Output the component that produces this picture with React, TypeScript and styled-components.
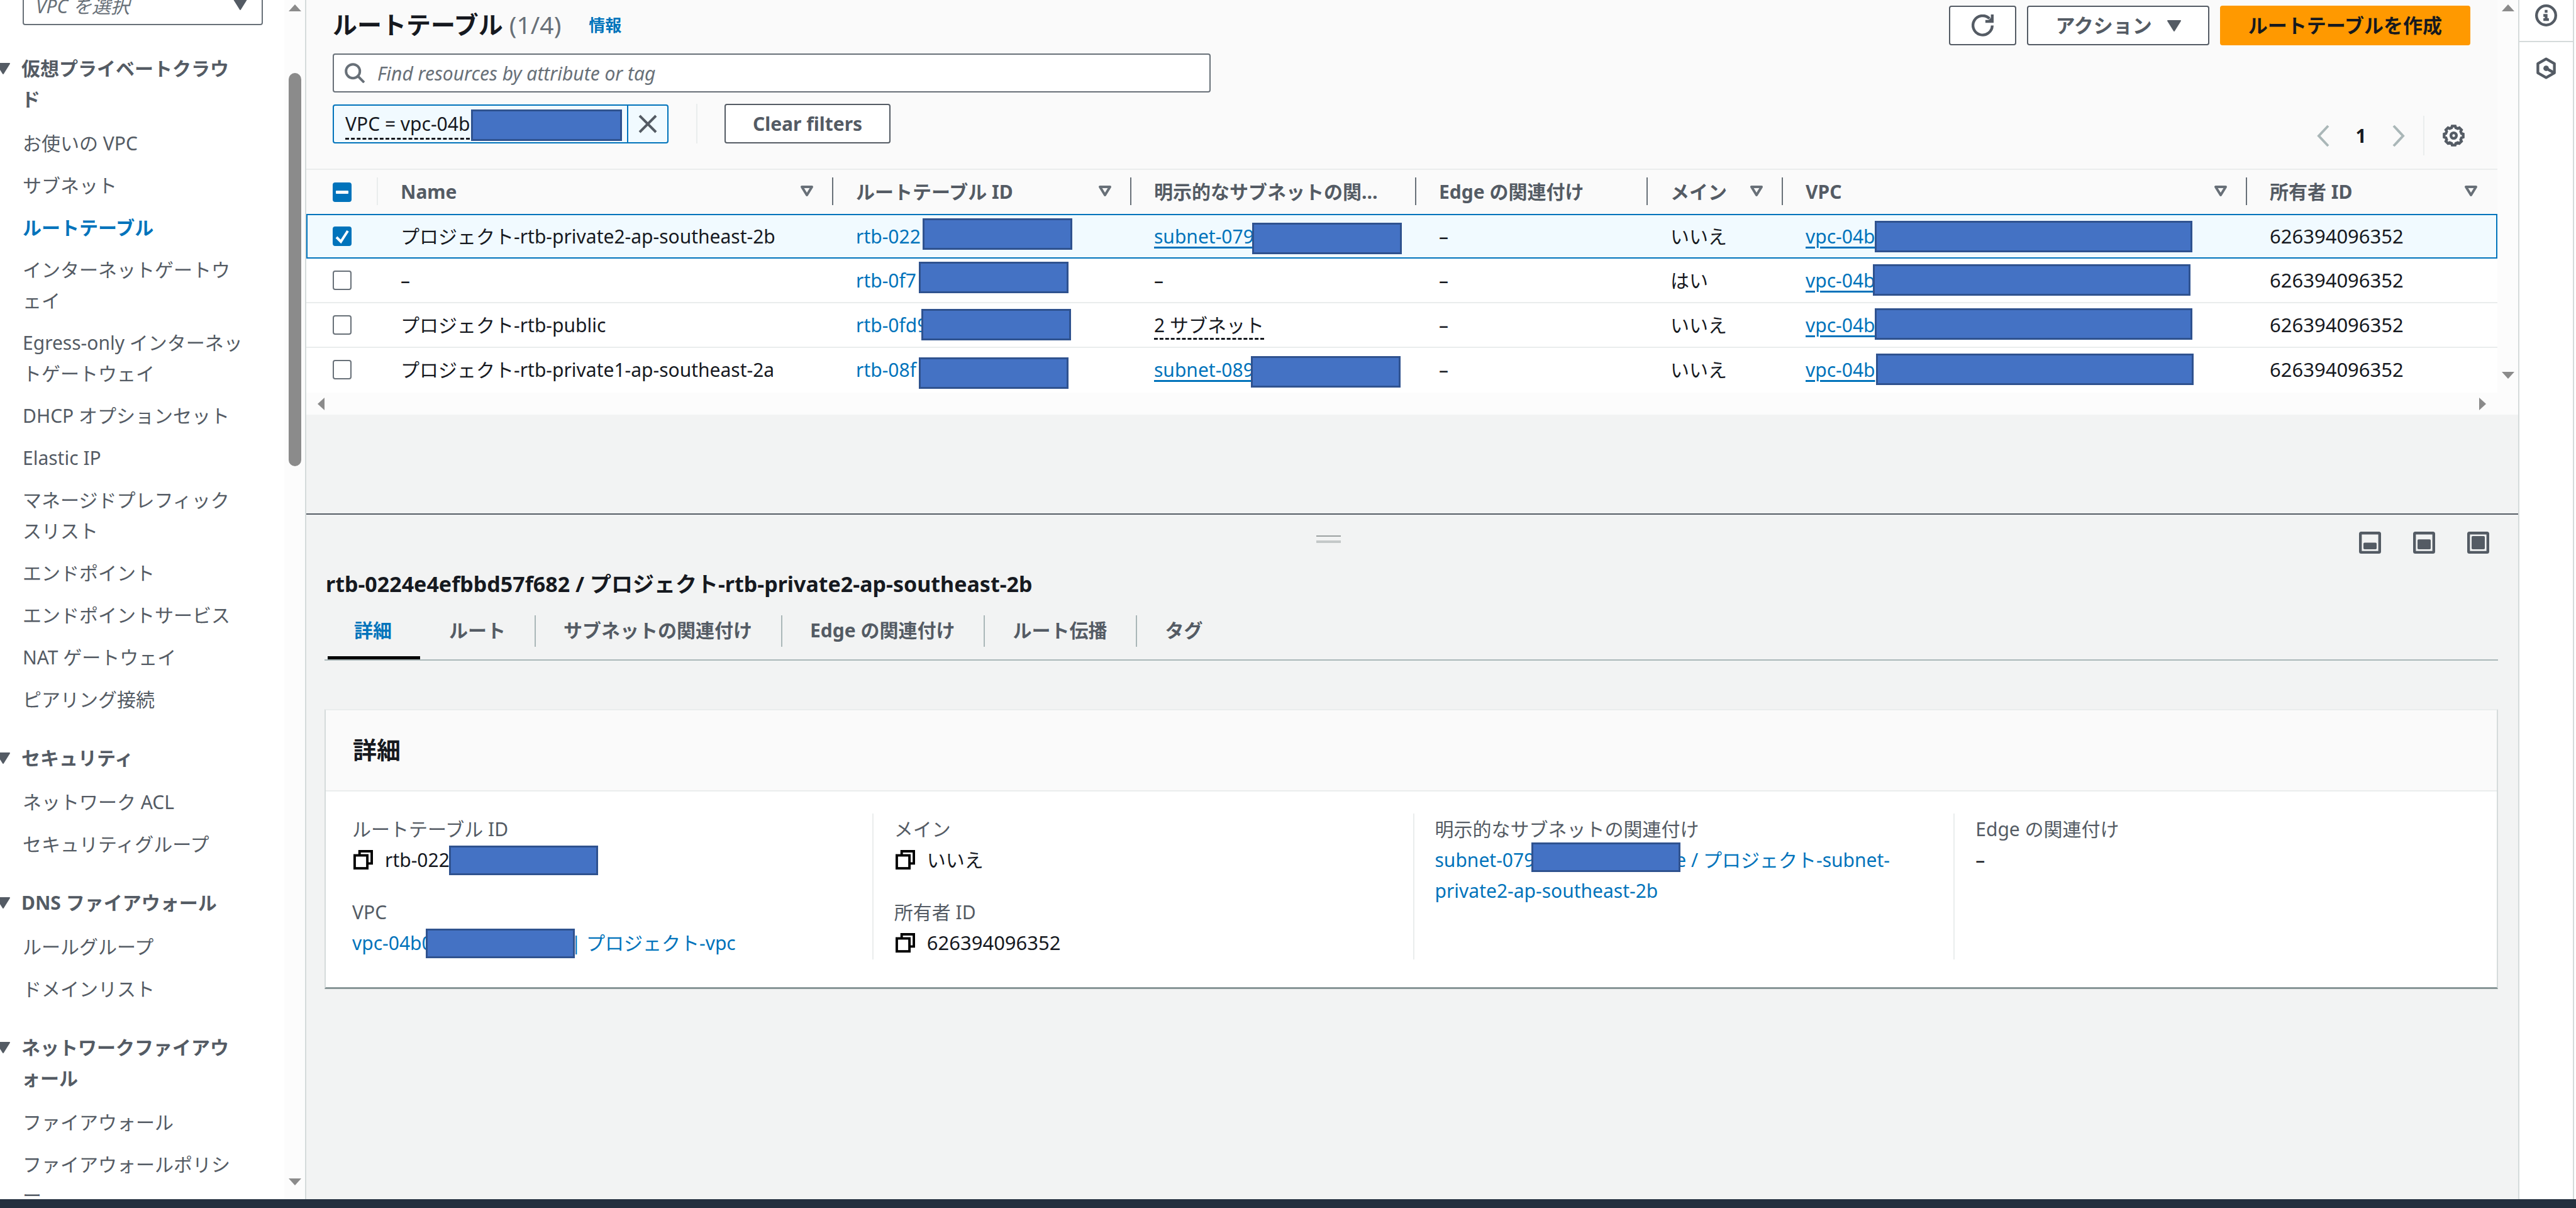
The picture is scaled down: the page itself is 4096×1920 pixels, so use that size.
import React from "react";
import styled, { createGlobalStyle, css } from "styled-components";

const c = {
  blue: "#0073bb",
  text: "#16191f",
  gray: "#545b64",
  mid: "#687078",
  line: "#eaeded",
  rule: "#d5dbdb",
  soft: "#aab7b8",
  pale: "#fafafa",
  page: "#f2f3f3",
  arrow: "#8b8b8b",
};

const Global = createGlobalStyle`
  * { box-sizing: border-box; }
  html { font-size: 30px; }
  body {
    margin: 0;
    color: ${c.text};
    background: #fff;
    font-family: "Noto Sans", "Noto Sans CJK JP", sans-serif;
    font-size: 30px;
    line-height: 49px;
    overflow: hidden;
  }
  button, input, select { font: inherit; color: inherit; }
  a { color: ${c.blue}; text-decoration: none; }
  h1, h2, h3, ul, dl, dd, p { margin: 0; padding: 0; }
`;

/* ---------- shell ---------- */
const Shell = styled.div`
  display: flex;
  flex-direction: column;
  height: 100vh;
`;
const Workspace = styled.div`
  flex: 1;
  min-height: 0;
  display: grid;
  grid-template-columns: 487px minmax(0, 1fr) 92px;
`;
const Footer = styled.footer`
  height: 14px;
  background: #232f3e;
`;

/* ---------- scrollbars ---------- */
const VTrack = styled.div`
  width: 33px;
  flex: none;
  display: flex;
  flex-direction: column;
  align-items: center;
  padding: 7px 0 22px;
  background: #fcfcfc;
`;
const HTrack = styled.div`
  height: 35px;
  display: flex;
  align-items: center;
  justify-content: space-between;
  padding: 0 51px 0 18px;
  background: #fcfcfc;
`;
const Thumb = styled.div`
  width: 20px;
  height: 625px;
  margin-top: 98px;
  border-radius: 10px;
  background: ${c.arrow};
`;
const Push = styled.div`
  flex: 1;
`;
const Tri = ({ dir }: { dir: "up" | "down" | "left" | "right" }) => {
  const vertical = dir === "up" || dir === "down";
  const pts = {
    up: "10,0 20,11 0,11",
    down: "0,0 20,0 10,11",
    left: "11,0 11,20 0,10",
    right: "0,0 11,10 0,20",
  }[dir];
  return (
    <svg width={vertical ? 20 : 11} height={vertical ? 11 : 20} aria-hidden="true">
      <polygon points={pts} fill={c.arrow} />
    </svg>
  );
};

/* ---------- icons ---------- */
const Icon = ({ size = 35, children, color = c.gray }: { size?: number; color?: string; children: React.ReactNode }) => (
  <svg width={size} height={size} viewBox="0 0 16 16" fill="none" stroke={color} strokeWidth={2} aria-hidden="true">
    {children}
  </svg>
);
const Caret = () => (
  <svg width={22} height={18} viewBox="0 0 22 18" aria-hidden="true">
    <polygon points="1,1 21,1 11,17" fill={c.gray} stroke={c.gray} strokeWidth={2} strokeLinejoin="round" />
  </svg>
);
const SortCaret = () => (
  <svg width={22} height={18} viewBox="0 0 22 18" aria-hidden="true">
    <polygon points="3,2 19,2 11,15" fill="none" stroke={c.mid} strokeWidth={4} strokeLinejoin="round" />
  </svg>
);
const RefreshIcon = () => (
  <Icon>
    <path d="M15 8a7 7 0 1 1-2-5" />
    <path d="M14 0h2v6h-6V4h2.4L14 2.4z" fill={c.gray} stroke="none" />
  </Icon>
);
const SearchIcon = () => (
  <Icon size={32} color={c.mid}>
    <circle cx="6.6" cy="6.6" r="5.5" />
    <path d="M10.5 10.5l5 5" />
  </Icon>
);
const gearPoints = Array.from({ length: 8 }, (_, k) =>
  [
    [-15, 5.9],
    [-9, 7],
    [9, 7],
    [15, 5.9],
  ].map(([d, r]) => {
    const a = ((k * 45 + d) * Math.PI) / 180;
    return `${(8 + r * Math.sin(a)).toFixed(2)},${(8 - r * Math.cos(a)).toFixed(2)}`;
  })
)
  .flat()
  .join(" ");
const GearIcon = () => (
  <Icon>
    <polygon points={gearPoints} />
    <circle cx="8" cy="8" r="2" />
  </Icon>
);
const InfoIcon = () => (
  <Icon>
    <circle cx="8" cy="8" r="7" />
    <path d="M7 4h2v2H7zM6 7h3v3h1v2H6v-2h1V9H6z" fill={c.gray} stroke="none" />
  </Icon>
);
const HexIcon = () => (
  <Icon>
    <path d="M8 1.2l6 3.4v6.8l-6 3.4-6-3.4V4.6z" strokeLinejoin="round" />
    <circle cx="8" cy="8" r="2" fill={c.gray} stroke="none" />
    <path d="M8 8l5.6 3.2" />
  </Icon>
);
const CopyIcon = () => (
  <Icon size={31} color="#000">
    <rect x="1" y="4.4" width="10.4" height="10.6" />
    <path d="M5 4V1h10v10h-3.5" />
  </Icon>
);
const PanelIcon = ({ top }: { top: number }) => (
  <Icon>
    <rect x="1" y="1" width="14" height="14" rx="0.6" />
    <rect x="3.2" y={top} width="9.6" height={12.8 - top} rx="0.8" fill={c.gray} stroke="none" />
  </Icon>
);

/* ---------- navigation ---------- */
const Sidebar = styled.aside`
  display: flex;
  min-height: 0;
  overflow: hidden;
  border-right: 2px solid ${c.rule};
`;
const NavScroll = styled.nav`
  flex: 1;
  min-width: 0;
  padding: 0 34px 0 36px;
  margin-top: -22px;
  line-break: loose;
  color: ${c.gray};
`;
const SelectBox = styled.div`
  position: relative;
  svg {
    position: absolute;
    right: 25px;
    top: 20px;
    pointer-events: none;
  }
`;
const Select = styled.select`
  appearance: none;
  width: 100%;
  height: 62px;
  padding: 0 60px 0 19px;
  border: 2px solid ${c.mid};
  border-radius: 4px;
  background: #fff;
  font-style: italic;
  color: ${c.mid};
`;
const Group = styled.section`
  margin-top: 44px;
  width: 355px;
`;
const GroupTitle = styled.h3`
  display: flex;
  gap: 18px;
  margin: 0 0 21px -42px;
  font-size: 30px;
  font-weight: 700;
  svg {
    flex: none;
    margin-top: 16px;
  }
`;
const NavList = styled.ul`
  display: flex;
  flex-direction: column;
  gap: 18px;
  list-style: none;
`;
const NavLink = styled.a<{ $active?: boolean }>`
  display: block;
  color: ${(p) => (p.$active ? c.blue : c.gray)};
  font-weight: ${(p) => (p.$active ? 700 : 400)};
`;

/* ---------- main ---------- */
const Main = styled.main`
  display: grid;
  grid-template-rows: 816px minmax(0, 1fr);
  min-width: 0;
  background: ${c.page};
`;
const TableArea = styled.div`
  min-width: 0;
`;
const TableFrame = styled.div`
  display: flex;
`;
const TableMain = styled.div`
  flex: 1;
  min-width: 0;
  background: ${c.pale};
`;
const Header = styled.header`
  padding: 9px 43px 21px 42px;
  border-bottom: 2px solid ${c.line};
`;
const Row = styled.div`
  display: flex;
  align-items: center;
`;
const Title = styled.h1`
  padding-bottom: 4px;
  font-size: 39px;
  font-weight: 700;
  margin-right: 44px;
  span {
    font-weight: 400;
    color: ${c.mid};
  }
`;
const InfoLink = styled.a`
  font-size: 26px;
  font-weight: 700;
`;
const Actions = styled.div`
  display: flex;
  gap: 17px;
  margin-left: auto;
  font-size: 31px;
`;
const Button = styled.button<{ $primary?: boolean; $icon?: boolean }>`
  display: flex;
  align-items: center;
  justify-content: center;
  gap: 24px;
  height: 63px;
  padding: 0 ${(p) => (p.$icon ? 34 : 43)}px;
  border: 2px solid ${(p) => (p.$primary ? "#ff9900" : c.gray)};
  border-radius: 4px;
  background: ${(p) => (p.$primary ? "#ff9900" : "#fff")};
  color: ${(p) => (p.$primary ? c.text : c.gray)};
  font-weight: 700;
  white-space: nowrap;
`;
const Filters = styled.div`
  display: flex;
  justify-content: space-between;
  align-items: flex-end;
  margin-top: 13px;
`;
const FilterStack = styled.div`
  display: flex;
  flex-direction: column;
  gap: 18px;
  padding-bottom: 19px;
  flex: 0 1 1396px;
`;
const Search = styled.label`
  display: flex;
  align-items: center;
  gap: 20px;
  height: 62px;
  padding: 0 17px;
  border: 2px solid ${c.mid};
  border-radius: 4px;
  background: #fff;
  svg {
    flex: none;
  }
`;
const SearchInput = styled.input`
  flex: 1;
  min-width: 0;
  border: 0;
  padding: 0;
  outline: 0;
  background: none;
  &::placeholder {
    color: ${c.mid};
    font-style: italic;
    opacity: 1;
  }
`;
const Token = styled.div`
  position: relative;
  display: flex;
  align-items: center;
  width: 534px;
  height: 62px;
  border: 2px solid ${c.blue};
  border-radius: 4px;
  background: #f1faff;
`;
const TokenText = styled.div`
  flex: 1;
  padding-left: 18px;
  span {
    padding-bottom: 2px;
    border-bottom: 3px dashed ${c.text};
  }
`;
const TokenClose = styled.button`
  display: grid;
  place-items: center;
  width: 64px;
  height: 100%;
  padding: 0;
  border: 0;
  border-left: 2px solid ${c.blue};
  background: none;
`;
const Divider = styled.i<{ $gap: string }>`
  width: 2px;
  height: 63px;
  margin: ${(p) => p.$gap};
  background: ${c.line};
`;
const Pager = styled.div`
  display: flex;
  align-items: center;
  font-weight: 700;
`;
const Bare = styled.button`
  display: grid;
  place-items: center;
  padding: 0 9px;
  border: 0;
  background: none;
`;
const PageNo = styled.button`
  width: 78px;
  padding: 0;
  margin: 0 2px;
  border: 0;
  background: none;
  font-weight: 700;
`;

/* A solid cover laid over part of an identifier. */
const Cover = styled.span<{ $x: number; $y: number; $w?: number }>`
  position: absolute;
  left: ${(p) => p.$x}px;
  top: ${(p) => p.$y}px;
  width: ${(p) => p.$w ?? 238}px;
  height: 50px;
  border: 3px solid #2f528f;
  background: #4472c4;
`;
const InlineCover = styled.span<{ $margin: string }>`
  position: relative;
  display: inline-block;
  width: 237px;
  height: 47px;
  margin: ${(p) => p.$margin};
  vertical-align: top;
  border: 3px solid #2f528f;
  background: #4472c4;
`;

/* ---------- table ---------- */
const Table = styled.table`
  width: 100%;
  table-layout: fixed;
  border-collapse: separate;
  border-spacing: 0;
`;
const Th = styled.th<{ $sort?: boolean }>`
  position: relative;
  height: 70px;
  padding: 0 ${(p) => (p.$sort ? 31 : 46)}px 2px 36px;
  text-align: left;
  color: ${c.gray};
  font-weight: 700;
  &:not(:last-child)::after {
    content: "";
    position: absolute;
    right: 0;
    top: 12px;
    width: 2px;
    height: 44px;
    background: ${c.mid};
  }
`;
const CheckTh = styled(Th)`
  padding: 0 0 0 42px;
  &:not(:last-child)::after {
    background: ${c.line};
  }
`;
const ThInner = styled.div`
  display: flex;
  align-items: center;
  justify-content: space-between;
  span {
    overflow: hidden;
    text-overflow: ellipsis;
    white-space: nowrap;
  }
  svg {
    flex: none;
  }
`;
const Tr = styled.tr<{ $on?: boolean }>`
  background: ${(p) => (p.$on ? "#f1faff" : "#fff")};
  & > td {
    border-bottom: 2px solid ${(p) => (p.$on ? c.blue : c.line)};
    border-top: ${(p) => (p.$on ? `2px solid ${c.blue}` : "0")};
  }
  &:last-child > td {
    border-bottom-color: #fff;
  }
  ${(p) =>
    p.$on &&
    css`
      & > td:first-child {
        box-shadow: inset 2px 0 ${c.blue};
      }
      & > td:last-child {
        box-shadow: inset -2px 0 ${c.blue};
      }
    `}
`;
const Td = styled.td`
  position: relative;
  height: 71px;
  padding: 0 0 0 36px;
  white-space: nowrap;
`;
const NumTd = styled(Td)`
  font-size: 31px;
`;
const CheckCell = styled(Td)`
  padding: 0 0 0 42px;
`;
const Check = styled.input<{ $mixed?: boolean }>`
  appearance: none;
  display: block;
  width: 30px;
  height: 31px;
  margin: 0;
  border: 2px solid ${c.mid};
  border-radius: 4px;
  background: #fff;
  ${(p) =>
    (p.$mixed || p.checked) &&
    css`
      border-color: ${c.blue};
      background: ${c.blue};
    `}
`;
const CheckBoxWrap = styled.span`
  position: relative;
  display: block;
  width: 30px;
  svg {
    position: absolute;
    inset: 0;
    pointer-events: none;
  }
`;
const IdLink = styled.a<{ $line?: boolean }>`
  text-decoration: ${(p) => (p.$line ? "underline" : "none")};
  text-decoration-thickness: 3px;
  text-underline-offset: 5px;
`;
const Dotted = styled.span`
  border-bottom: 3px dashed ${c.text};
`;

/* ---------- split panel ---------- */
const Split = styled.section`
  border-top: 2px solid ${c.gray};
  padding: 26px 32px 0 29px;
`;
const SplitTop = styled.div`
  display: flex;
  height: 36px;
`;
const HandleArea = styled.div`
  flex: 1;
  display: flex;
  justify-content: center;
  padding-right: 42px;
`;
const Handle = styled.div`
  width: 39px;
  height: 12px;
  margin-top: 7px;
  border-top: 2px solid #9a9f9f;
  border-bottom: 4px solid #c4c8c8;
`;
const Views = styled.div`
  display: flex;
  gap: 51px;
  padding-right: 14px;
`;
const ViewButton = styled(Bare)`
  padding: 0;
`;
const SplitTitle = styled.h2`
  margin-top: 20px;
  padding-left: 2px;
  font-size: 34px;
  font-weight: 700;
  line-height: 56px;
`;
const Tabs = styled.div`
  display: flex;
  align-items: stretch;
  height: 94px;
  padding-left: 5px;
  border-bottom: 2px solid ${c.soft};
`;
const Tab = styled.button<{ $active?: boolean }>`
  position: relative;
  padding: 0 46px 2px 46px;
  border: 0;
  background: none;
  font-weight: 700;
  color: ${(p) => (p.$active ? c.blue : c.gray)};
  ${(p) =>
    p.$active &&
    css`
      padding: 3px 45px 0 42px;
      border-bottom: 5px solid #000;
    `}
  & + &::before {
    content: "";
    position: absolute;
    left: 0;
    top: 22px;
    width: 2px;
    height: 50px;
    background: ${c.soft};
  }
`;
const Card = styled.section`
  margin-top: 77px;
  border: 2px solid ${c.line};
  border-left-color: ${c.rule};
  border-right-color: ${c.rule};
  border-bottom: 3px solid #879596;
  background: #fff;
`;
const CardHead = styled.h2`
  padding: 38px 43px 40px;
  font-size: 38px;
  font-weight: 700;
  border-bottom: 2px solid ${c.line};
  background: ${c.pale};
`;
const Fields = styled.div`
  display: grid;
  grid-template-columns: repeat(4, minmax(0, 1fr));
  padding: 35px 4px 44px 9px;
`;
const Column = styled.dl`
  min-height: 232px;
  padding: 0 70px 0 33px;
  & + & {
    border-left: 2px solid ${c.line};
  }
`;
const Label = styled.dt`
  line-height: 49px;
  color: ${c.gray};
`;
const Value = styled.dd`
  & + dt {
    margin-top: 34px;
  }
`;
const CopyValue = styled.div<{ $num?: boolean }>`
  display: flex;
  align-items: center;
  gap: 19px;
  font-size: ${(p) => (p.$num ? 31 : 30)}px;
  white-space: nowrap;
`;
const CopyButton = styled.button`
  display: flex;
  padding: 0;
  margin-left: 2px;
  border: 0;
  background: none;
`;

/* ---------- right rail ---------- */
const Rail = styled.aside`
  display: flex;
  flex-direction: column;
  margin-right: 3px;
  border-left: 2px solid ${c.rule};
  border-right: 2px solid ${c.rule};
  background: #fff;
`;
const RailButton = styled.button`
  display: grid;
  place-items: center;
  height: 83px;
  padding: 0;
  border: 0;
  background: none;
  &:first-child {
    height: 67px;
    padding-bottom: 16px;
    border-bottom: 2px solid ${c.rule};
  }
`;

const groups = [
  {
    title: "仮想プライベートクラウド",
    items: [
      "お使いの VPC",
      "サブネット",
      "ルートテーブル",
      "インターネットゲートウェイ",
      "Egress-only インターネットゲートウェイ",
      "DHCP オプションセット",
      "Elastic IP",
      "マネージドプレフィックスリスト",
      "エンドポイント",
      "エンドポイントサービス",
      "NAT ゲートウェイ",
      "ピアリング接続",
    ],
  },
  { title: "セキュリティ", items: ["ネットワーク ACL", "セキュリティグループ"] },
  { title: "DNS ファイアウォール", items: ["ルールグループ", "ドメインリスト"] },
  { title: "ネットワークファイアウォール", items: ["ファイアウォール", "ファイアウォールポリシー"] },
];

type Spot = [number, number];
type RouteTable = {
  name: string;
  id: string;
  idAt: Spot;
  subnet: string;
  subnetAt?: Spot;
  main: string;
  vpcAt: Spot;
};
const rows: RouteTable[] = [
  { name: "プロジェクト-rtb-private2-ap-southeast-2b", id: "rtb-022", idAt: [142, 5], subnet: "subnet-079", subnetAt: [192, 12], main: "いいえ", vpcAt: [146, 9] },
  { name: "–", id: "rtb-0f7", idAt: [136, 5], subnet: "–", main: "はい", vpcAt: [143, 9] },
  { name: "プロジェクト-rtb-public", id: "rtb-0fd9", idAt: [140, 9], subnet: "2 サブネット", main: "いいえ", vpcAt: [146, 8] },
  { name: "プロジェクト-rtb-private1-ap-southeast-2a", id: "rtb-08f", idAt: [136, 15], subnet: "subnet-089", subnetAt: [190, 13], main: "いいえ", vpcAt: [148, 9] },
];

const heads: { label: string; sort: boolean; width?: number }[] = [
  { label: "Name", sort: true, width: 724 },
  { label: "ルートテーブル ID", sort: true, width: 474 },
  { label: "明示的なサブネットの関連付け", sort: false, width: 453 },
  { label: "Edge の関連付け", sort: false, width: 368 },
  { label: "メイン", sort: true, width: 215 },
  { label: "VPC", sort: true, width: 738 },
  { label: "所有者 ID", sort: true },
];

const tabs = ["詳細", "ルート", "サブネットの関連付け", "Edge の関連付け", "ルート伝播", "タグ"];

const Subnet = ({ row }: { row: RouteTable }) => {
  if (row.subnetAt)
    return (
      <>
        <IdLink href="#" $line>{row.subnet}</IdLink>
        <Cover $x={row.subnetAt[0]} $y={row.subnetAt[1]} />
      </>
    );
  return row.subnet === "–" ? <>–</> : <Dotted>{row.subnet}</Dotted>;
};

export default function App() {
  return (
    <Shell lang="ja">
      <Global />
      <Workspace>
        <Sidebar>
          <NavScroll aria-label="VPC">
            <SelectBox>
              <Select aria-label="VPC を選択">
                <option>VPC を選択</option>
              </Select>
              <Caret />
            </SelectBox>
            {groups.map((g) => (
              <Group key={g.title}>
                <GroupTitle>
                  <Caret />
                  <span>{g.title}</span>
                </GroupTitle>
                <NavList>
                  {g.items.map((item) => (
                    <li key={item}>
                      <NavLink href="#" $active={item === "ルートテーブル"}>{item}</NavLink>
                    </li>
                  ))}
                </NavList>
              </Group>
            ))}
          </NavScroll>
          <VTrack>
            <Tri dir="up" />
            <Thumb />
            <Push />
            <Tri dir="down" />
          </VTrack>
        </Sidebar>

        <Main>
          <TableArea>
            <TableFrame>
              <TableMain>
                <Header>
                  <Row>
                    <Title>
                      ルートテーブル <span>(1/4)</span>
                    </Title>
                    <InfoLink href="#">情報</InfoLink>
                    <Actions>
                      <Button $icon aria-label="更新">
                        <RefreshIcon />
                      </Button>
                      <Button>
                        アクション
                        <Caret />
                      </Button>
                      <Button $primary>ルートテーブルを作成</Button>
                    </Actions>
                  </Row>
                  <Filters>
                    <FilterStack>
                      <Search>
                        <SearchIcon />
                        <SearchInput aria-label="Find resources by attribute or tag" placeholder="Find resources by attribute or tag" />
                      </Search>
                      <Row>
                        <Token>
                          <TokenText>
                            <span>VPC = vpc-04b</span>
                          </TokenText>
                          <Cover $x={218} $y={6} $w={240} />
                          <TokenClose aria-label="Remove">
                            <svg width={30} height={30} viewBox="0 0 30 30" fill="none" stroke={c.gray} strokeWidth={4}>
                              <path d="M2 2l26 26M28 2L2 28" />
                            </svg>
                          </TokenClose>
                        </Token>
                        <Divider $gap="0 43px 0 44px" />
                        <Button>Clear filters</Button>
                      </Row>
                    </FilterStack>
                    <Pager>
                      <Bare aria-label="前へ">
                        <svg width={20} height={36} viewBox="0 0 20 36" fill="none" stroke={c.soft} strokeWidth={4}>
                          <path d="M18 2L3 18l15 16" />
                        </svg>
                      </Bare>
                      <PageNo>1</PageNo>
                      <Bare aria-label="次へ">
                        <svg width={20} height={36} viewBox="0 0 20 36" fill="none" stroke={c.soft} strokeWidth={4}>
                          <path d="M2 2l15 16L2 34" />
                        </svg>
                      </Bare>
                      <Divider $gap="0 20px" />
                      <Bare aria-label="設定">
                        <GearIcon />
                      </Bare>
                    </Pager>
                  </Filters>
                </Header>
                <Table>
                  <colgroup>
                    <col style={{ width: 114 }} />
                    {heads.map((h) => (
                      <col key={h.label} style={{ width: h.width }} />
                    ))}
                  </colgroup>
                  <thead>
                    <tr>
                      <CheckTh>
                        <CheckBoxWrap>
                          <Check type="checkbox" $mixed aria-label="すべて選択" />
                          <svg width={30} height={31}>
                            <rect x="5" y="13" width="20" height="5" rx="1" fill="#fff" />
                          </svg>
                        </CheckBoxWrap>
                      </CheckTh>
                      {heads.map((h) => (
                        <Th key={h.label} scope="col" $sort={h.sort}>
                          <ThInner>
                            <span>{h.label}</span>
                            {h.sort && <SortCaret />}
                          </ThInner>
                        </Th>
                      ))}
                    </tr>
                  </thead>
                  <tbody>
                    {rows.map((r, i) => (
                      <Tr key={r.id} $on={i === 0}>
                        <CheckCell>
                          <CheckBoxWrap>
                            <Check type="checkbox" checked={i === 0} readOnly aria-label={r.name} />
                            {i === 0 && (
                              <svg width={30} height={31} fill="none" stroke="#fff" strokeWidth={4}>
                                <path d="M6 17l7 7L24 7" />
                              </svg>
                            )}
                          </CheckBoxWrap>
                        </CheckCell>
                        <Td>{r.name}</Td>
                        <Td>
                          <IdLink href="#">{r.id}</IdLink>
                          <Cover $x={r.idAt[0]} $y={r.idAt[1]} />
                        </Td>
                        <Td>
                          <Subnet row={r} />
                        </Td>
                        <Td>–</Td>
                        <Td>{r.main}</Td>
                        <Td>
                          <IdLink href="#" $line>vpc-04b</IdLink>
                          <Cover $x={r.vpcAt[0]} $y={r.vpcAt[1]} $w={505} />
                        </Td>
                        <NumTd>626394096352</NumTd>
                      </Tr>
                    ))}
                  </tbody>
                </Table>
              </TableMain>
              <VTrack>
                <Tri dir="up" />
                <Push />
                <Tri dir="down" />
              </VTrack>
            </TableFrame>
            <HTrack>
              <Tri dir="left" />
              <Tri dir="right" />
            </HTrack>
          </TableArea>

          <Split>
            <SplitTop>
              <HandleArea>
                <Handle />
              </HandleArea>
              <Views>
                <ViewButton aria-label="小">
                  <PanelIcon top={8} />
                </ViewButton>
                <ViewButton aria-label="中">
                  <PanelIcon top={5.6} />
                </ViewButton>
                <ViewButton aria-label="大">
                  <PanelIcon top={3.2} />
                </ViewButton>
              </Views>
            </SplitTop>
            <SplitTitle>rtb-0224e4efbbd57f682 / プロジェクト-rtb-private2-ap-southeast-2b</SplitTitle>
            <Tabs role="tablist">
              {tabs.map((t, i) => (
                <Tab key={t} role="tab" aria-selected={i === 0} $active={i === 0}>{t}</Tab>
              ))}
            </Tabs>
            <Card>
              <CardHead>詳細</CardHead>
              <Fields>
                <Column>
                  <Label>ルートテーブル ID</Label>
                  <Value>
                    <CopyValue>
                      <CopyButton aria-label="コピー"><CopyIcon /></CopyButton>
                      <span>rtb-022<InlineCover $margin="2px 0 0 -1px" /></span>
                    </CopyValue>
                  </Value>
                  <Label>VPC</Label>
                  <Value>
                    <a href="#">vpc-04b0<InlineCover $margin="2px -6px 0 -11px" />| プロジェクト-vpc</a>
                  </Value>
                </Column>
                <Column>
                  <Label>メイン</Label>
                  <Value>
                    <CopyValue>
                      <CopyButton aria-label="コピー"><CopyIcon /></CopyButton>
                      <span>いいえ</span>
                    </CopyValue>
                  </Value>
                  <Label>所有者 ID</Label>
                  <Value>
                    <CopyValue $num>
                      <CopyButton aria-label="コピー"><CopyIcon /></CopyButton>
                      <span>626394096352</span>
                    </CopyValue>
                  </Value>
                </Column>
                <Column>
                  <Label>明示的なサブネットの関連付け</Label>
                  <Value>
                    <a href="#">subnet-079<InlineCover $margin="-3px -8px 0 -5px" />e / プロジェクト-subnet-private2-ap-southeast-2b</a>
                  </Value>
                </Column>
                <Column>
                  <Label>Edge の関連付け</Label>
                  <Value>–</Value>
                </Column>
              </Fields>
            </Card>
          </Split>
        </Main>

        <Rail>
          <RailButton aria-label="情報">
            <InfoIcon />
          </RailButton>
          <RailButton aria-label="診断">
            <HexIcon />
          </RailButton>
        </Rail>
      </Workspace>
      <Footer />
    </Shell>
  );
}
